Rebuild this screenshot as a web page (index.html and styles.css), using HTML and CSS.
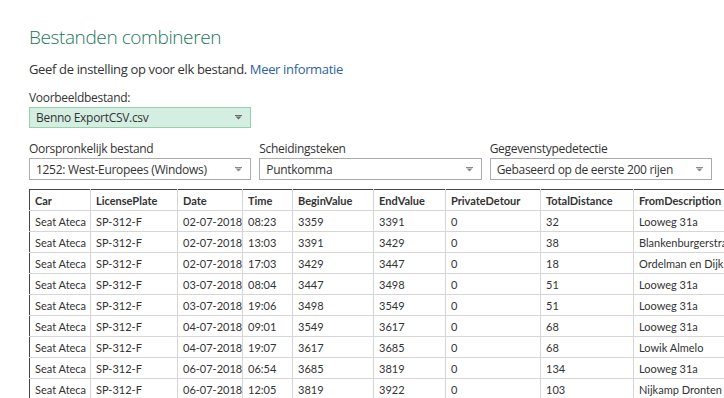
FILE: index.html
```html
<!DOCTYPE html>
<html lang="nl">
<head>
  <meta charset="UTF-8">
  <title>Bestanden combineren</title>
  <link rel="stylesheet" href="styles.css">
</head>
<body>
  <div class="dialog">
    <h1 class="title">Bestanden combineren</h1>
    <p class="intro">Geef de instelling op voor elk bestand. <a href="#" class="link">Meer informatie</a></p>

    <div class="field sample">
      <div class="label">Voorbeeldbestand:</div>
      <div class="select green">
        <span>Benno ExportCSV.csv</span>
        <svg class="arrow" width="7" height="5" viewBox="0 0 7 5"><rect x="0" y="0" width="7" height="1" fill="#6b6b6b"/><path d="M0.5 1.5h6L3.5 4.5z" fill="#6b6b6b"/></svg>
      </div>
    </div>

    <div class="options">
      <div class="field">
        <div class="label">Oorspronkelijk bestand</div>
        <div class="select">
          <span>1252: West-Europees (Windows)</span>
          <svg class="arrow" width="7" height="5" viewBox="0 0 7 5"><rect x="0" y="0" width="7" height="1" fill="#8a8a8a"/><path d="M0.5 1.5h6L3.5 4.5z" fill="#8a8a8a"/></svg>
        </div>
      </div>
      <div class="field">
        <div class="label">Scheidingsteken</div>
        <div class="select">
          <span>Puntkomma</span>
          <svg class="arrow" width="7" height="5" viewBox="0 0 7 5"><rect x="0" y="0" width="7" height="1" fill="#8a8a8a"/><path d="M0.5 1.5h6L3.5 4.5z" fill="#8a8a8a"/></svg>
        </div>
      </div>
      <div class="field">
        <div class="label">Gegevenstypedetectie</div>
        <div class="select">
          <span>Gebaseerd op de eerste 200 rijen</span>
          <svg class="arrow" width="7" height="5" viewBox="0 0 7 5"><rect x="0" y="0" width="7" height="1" fill="#8a8a8a"/><path d="M0.5 1.5h6L3.5 4.5z" fill="#8a8a8a"/></svg>
        </div>
      </div>
    </div>

    <table class="preview">
      <colgroup>
        <col style="width:61px"><col style="width:87px"><col style="width:65px"><col style="width:50px">
        <col style="width:81px"><col style="width:72px"><col style="width:95px"><col style="width:93px">
        <col style="width:140px">
      </colgroup>
      <thead>
        <tr>
          <th>Car</th><th>LicensePlate</th><th>Date</th><th>Time</th><th>BeginValue</th>
          <th>EndValue</th><th>PrivateDetour</th><th>TotalDistance</th><th>FromDescription</th>
        </tr>
      </thead>
      <tbody>
        <tr><td>Seat Ateca</td><td>SP-312-F</td><td>02-07-2018</td><td>08:23</td><td>3359</td><td>3391</td><td>0</td><td>32</td><td>Looweg 31a</td></tr>
        <tr><td>Seat Ateca</td><td>SP-312-F</td><td>02-07-2018</td><td>13:03</td><td>3391</td><td>3429</td><td>0</td><td>38</td><td>Blankenburgerstraat</td></tr>
        <tr><td>Seat Ateca</td><td>SP-312-F</td><td>02-07-2018</td><td>17:03</td><td>3429</td><td>3447</td><td>0</td><td>18</td><td>Ordelman en Dijkstra</td></tr>
        <tr><td>Seat Ateca</td><td>SP-312-F</td><td>03-07-2018</td><td>08:04</td><td>3447</td><td>3498</td><td>0</td><td>51</td><td>Looweg 31a</td></tr>
        <tr><td>Seat Ateca</td><td>SP-312-F</td><td>03-07-2018</td><td>19:06</td><td>3498</td><td>3549</td><td>0</td><td>51</td><td>Looweg 31a</td></tr>
        <tr><td>Seat Ateca</td><td>SP-312-F</td><td>04-07-2018</td><td>09:01</td><td>3549</td><td>3617</td><td>0</td><td>68</td><td>Looweg 31a</td></tr>
        <tr><td>Seat Ateca</td><td>SP-312-F</td><td>04-07-2018</td><td>19:07</td><td>3617</td><td>3685</td><td>0</td><td>68</td><td>Lowik Almelo</td></tr>
        <tr><td>Seat Ateca</td><td>SP-312-F</td><td>06-07-2018</td><td>06:54</td><td>3685</td><td>3819</td><td>0</td><td>134</td><td>Looweg 31a</td></tr>
        <tr><td>Seat Ateca</td><td>SP-312-F</td><td>06-07-2018</td><td>12:05</td><td>3819</td><td>3922</td><td>0</td><td>103</td><td>Nijkamp Dronten</td></tr>
      </tbody>
    </table>
  </div>
</body>
</html>
```

FILE: styles.css
```css
html, body {
  margin: 0;
  background-color: #fff;
  overflow: hidden;
}
body {
  font-family: "Open Sans", "Noto Sans", sans-serif;
  color: #333;
  width: 724px;
  height: 398px;
}
.dialog {
  padding: 24px 0 0 29px;
}
.title {
  margin: 0;
  font-size: 19px;
  font-weight: 300;
  line-height: 26px;
  letter-spacing: -0.4px;
  color: #24775a;
}
.intro {
  margin: 10px 0 0 0;
  font-size: 13px;
  line-height: 18px;
  letter-spacing: -0.35px;
}
.link {
  color: #2f5f9e;
  text-decoration: none;
}
.field .label {
  font-size: 12px;
  line-height: 17px;
  letter-spacing: -0.3px;
}
.sample {
  margin-top: 11px;
  width: 222px;
}
.select {
  box-sizing: border-box;
  height: 22px;
  border: 1px solid #ababab;
  background-color: #fff;
  display: flex;
  align-items: center;
  justify-content: space-between;
  padding: 0 8px 0 6px;
  font-size: 12px;
  letter-spacing: -0.3px;
  margin-top: 1px;
}
.select.green {
  background-color: #d4efe1;
  border-color: #96d1ae;
  height: 21px;
}
.arrow {
  display: block;
}
.options {
  display: flex;
  gap: 8px;
  margin-top: 12px;
  width: 683px;
}
.options .field {
  flex: 1;
}
.preview {
  margin-top: 9px;
  border-collapse: collapse;
  table-layout: fixed;
  width: 744px;
  font-family: Lato, "Open Sans", sans-serif;
  font-size: 11px;
  color: #333;
  border-top: 1px solid #444;
  border-left: 1px solid #444;
}
.preview th, .preview td {
  height: 20px;
  padding: 0 5px;
  text-align: left;
  white-space: nowrap;
  overflow: hidden;
  border-right: 1px solid #d6d6d6;
  border-bottom: 1px solid #d6d6d6;
}
.preview th {
  font-weight: bold;
}
```
